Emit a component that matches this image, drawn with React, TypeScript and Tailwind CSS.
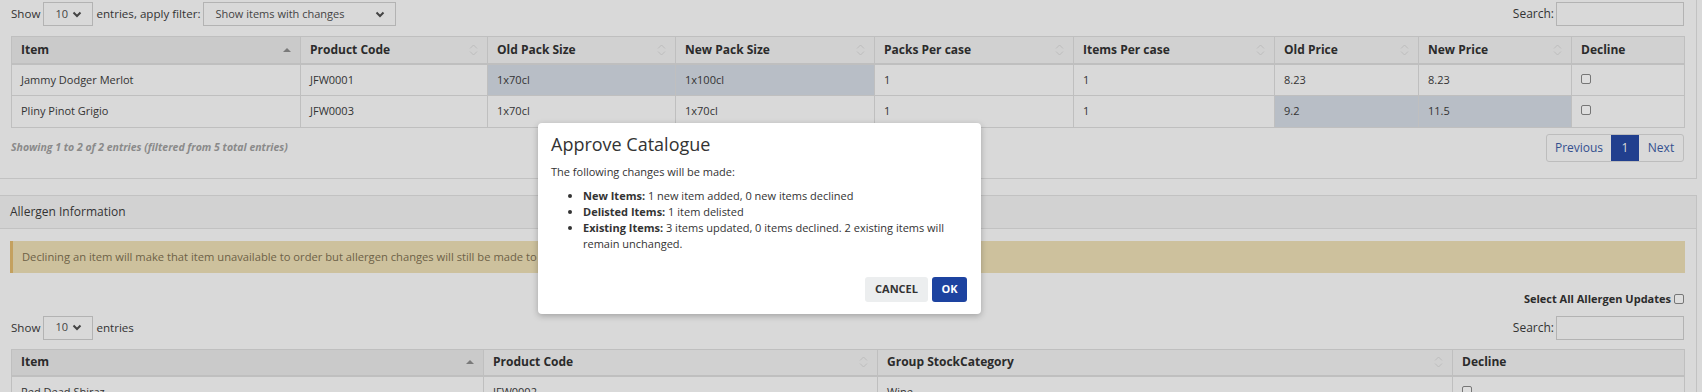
import { ReactNode } from 'react';

type Col = { label: string; width: number; sort?: 'asc' | 'both' | 'none' };

const catalogueCols: Col[] = [
  { label: 'Item', width: 289, sort: 'asc' },
  { label: 'Product Code', width: 187, sort: 'both' },
  { label: 'Old Pack Size', width: 188, sort: 'both' },
  { label: 'New Pack Size', width: 199, sort: 'both' },
  { label: 'Packs Per case', width: 199, sort: 'both' },
  { label: 'Items Per case', width: 201, sort: 'both' },
  { label: 'Old Price', width: 144, sort: 'both' },
  { label: 'New Price', width: 153, sort: 'both' },
  { label: 'Decline', width: 113, sort: 'none' },
];

const catalogueRows = [
  { cells: ['Jammy Dodger Merlot', 'JFW0001', '1x70cl', '1x100cl', '1', '1', '8.23', '8.23'], changed: [2, 3] },
  { cells: ['Pliny Pinot Grigio', 'JFW0003', '1x70cl', '1x70cl', '1', '1', '9.2', '11.5'], changed: [6, 7] },
];

const allergenCols: Col[] = [
  { label: 'Item', width: 472, sort: 'asc' },
  { label: 'Product Code', width: 394, sort: 'both' },
  { label: 'Group StockCategory', width: 575, sort: 'both' },
  { label: 'Decline', width: 232, sort: 'none' },
];

function SortIcon({ sort }: { sort?: Col['sort'] }) {
  if (sort === 'asc') {
    return (
      <svg width="8" height="6" viewBox="0 0 8 6" className="shrink-0">
        <polygon points="0,5 4,1 8,5" fill="#7a7a7a" />
      </svg>
    );
  }
  if (sort === 'both') {
    return (
      <svg width="9" height="14" viewBox="0 0 9 14" className="shrink-0">
        <path d="M1 5.5 L4.5 2 L8 5.5" fill="none" stroke="#bdbdbd" strokeWidth="1" />
        <path d="M1 8.5 L4.5 12 L8 8.5" fill="none" stroke="#bdbdbd" strokeWidth="1" />
      </svg>
    );
  }
  return null;
}

function Chevron() {
  return (
    <svg width="10" height="7" viewBox="0 0 10 7">
      <path d="M1.5 1.5 L5 5 L8.5 1.5" fill="none" stroke="#444" strokeWidth="2" />
    </svg>
  );
}

function Checkbox() {
  return <span className="inline-block h-[10px] w-[10px] rounded-[2px] border border-[#767676] bg-[#dedede]" />;
}

function Select({ value, width }: { value: string; width: number }) {
  return (
    <div
      className="flex h-[24px] items-center justify-between border border-[#b3b3b3] pl-[11px] pr-[10px] text-[11px] text-[#444]"
      style={{ width }}
    >
      <span>{value}</span>
      <Chevron />
    </div>
  );
}

function SearchBox() {
  return (
    <div className="flex items-center gap-[2px] text-[12px] text-[#333]">
      <span>Search:</span>
      <div className="h-[24px] w-[128px] border border-[#b3b3b3]" />
    </div>
  );
}

function HeaderRow({ cols }: { cols: Col[] }) {
  return (
    <tr className="h-[27px]">
      {cols.map((col) => (
        <th
          key={col.label}
          className={`border border-b-2 border-[#bfbfbf] px-[9px] text-left text-[12px] font-bold text-[#2b2b2b] ${
            col.sort === 'asc' ? 'bg-[#cacaca]' : 'bg-[#d1d1d1]'
          }`}
        >
          <div className="flex items-center justify-between">
            <span>{col.label}</span>
            <SortIcon sort={col.sort} />
          </div>
        </th>
      ))}
    </tr>
  );
}

function Cell({ children, highlight }: { children: ReactNode; highlight?: boolean }) {
  return (
    <td className={`h-[32px] border border-[#bfbfbf] px-[9px] text-[11px] text-[#333] ${highlight ? 'bg-[#b8bec6]' : ''}`}>
      {children}
    </td>
  );
}

function DataTable({ cols, children }: { cols: Col[]; children: ReactNode }) {
  return (
    <table className="w-[1673px] table-fixed border-collapse">
      <colgroup>
        {cols.map((col) => (
          <col key={col.label} style={{ width: col.width }} />
        ))}
      </colgroup>
      <thead>
        <HeaderRow cols={cols} />
      </thead>
      <tbody>{children}</tbody>
    </table>
  );
}

function ApproveModal() {
  return (
    <div className="absolute left-[538px] top-[123px] h-[191px] w-[443px] rounded-[4px] bg-white pl-[13px] pr-[14px] pt-[7px] shadow-[0_2px_6px_rgba(0,0,0,0.25)]">
      <h2 className="text-[18px] leading-[28px] text-[#333]">Approve Catalogue</h2>
      <p className="mt-[6px] text-[11px] leading-[16px] text-[#333]">The following changes will be made:</p>
      <ul className="mt-[8px] list-disc pl-[32px] text-[11px] leading-[16px] text-[#333]">
        <li>
          <b>New Items:</b> 1 new item added, 0 new items declined
        </li>
        <li>
          <b>Delisted Items:</b> 1 item delisted
        </li>
        <li>
          <b>Existing Items:</b> 3 items updated, 0 items declined. 2 existing items will remain unchanged.
        </li>
      </ul>
      <div className="mt-[25px] flex justify-end gap-[4px]">
        <button className="h-[25px] w-[63px] rounded-[3px] bg-[#eceeef] text-[11px] font-bold text-[#333]">CANCEL</button>
        <button className="h-[25px] w-[35px] rounded-[3px] bg-[#1d43a0] text-[11px] font-bold text-white">OK</button>
      </div>
    </div>
  );
}

export default function App() {
  return (
    <div className="relative h-[392px] w-[1702px] overflow-hidden bg-[#d9d9d9] font-['Open_Sans',sans-serif] text-[#333]">
      <section className="w-[1697px] border-b border-r border-[#c2c2c2] pb-[16px] pl-[11px] pr-[12px] pt-[2px]">
        <div className="flex h-[24px] items-center justify-between">
          <div className="flex items-center gap-[3px] text-[11.6px]">
            <span>Show</span>
            <Select value="10" width={50} />
            <span>entries, apply filter:</span>
            <Select value="Show items with changes" width={193} />
          </div>
          <SearchBox />
        </div>

        <div className="mt-[10px]">
          <DataTable cols={catalogueCols}>
            {catalogueRows.map((row) => (
              <tr key={row.cells[1]}>
                {row.cells.map((cell, i) => (
                  <Cell key={i} highlight={row.changed.includes(i)}>
                    {cell}
                  </Cell>
                ))}
                <Cell>
                  <Checkbox />
                </Cell>
              </tr>
            ))}
          </DataTable>
        </div>

        <div className="mt-[6px] flex h-[28px] items-center justify-between">
          <span className="text-[10.5px] font-bold italic text-[#8a8a8a]">
            Showing 1 to 2 of 2 entries (filtered from 5 total entries)
          </span>
          <div className="flex h-[28px] overflow-hidden rounded-[3px] border border-[#bdbdbd] text-[12px] text-[#34508f]">
            <span className="flex w-[64px] items-center justify-center">Previous</span>
            <span className="flex w-[28px] items-center justify-center bg-[#213f8e] text-[#d9d9d9]">1</span>
            <span className="flex w-[44px] items-center justify-center">Next</span>
          </div>
        </div>
      </section>

      <section className="mt-[16px] w-[1697px] border-r border-t border-[#c2c2c2]">
        <div className="flex h-[33px] items-center border-b border-[#c2c2c2] bg-[#d2d2d2] px-[10px] text-[12px]">
          Allergen Information
        </div>
        <div className="pl-[10px] pr-[11px] pt-[12px]">
          <div className="flex h-[32px] items-center border-l-[3px] border-[#c4a15f] bg-[#cdc19d] pl-[9px] text-[11.2px] text-[#6e6147]">
            Declining an item will make that item unavailable to order but allergen changes will still be made to the catalogue.
          </div>
          <div className="mx-[1px]">
            <div className="mt-[18px] flex items-center justify-end gap-[3px] text-[11px] font-bold text-[#2b2b2b]">
              <span>Select All Allergen Updates</span>
              <Checkbox />
            </div>
            <div className="mt-[8px] flex h-[24px] items-center justify-between">
              <div className="flex items-center gap-[3px] text-[11.6px]">
                <span>Show</span>
                <Select value="10" width={50} />
                <span>entries</span>
              </div>
              <SearchBox />
            </div>
            <div className="mt-[9px]">
              <DataTable cols={allergenCols}>
                <tr>
                  <Cell>Red Dead Shiraz</Cell>
                  <Cell>JFW0002</Cell>
                  <Cell>Wine</Cell>
                  <Cell>
                    <Checkbox />
                  </Cell>
                </tr>
              </DataTable>
            </div>
          </div>
        </div>
      </section>

      <ApproveModal />
    </div>
  );
}
